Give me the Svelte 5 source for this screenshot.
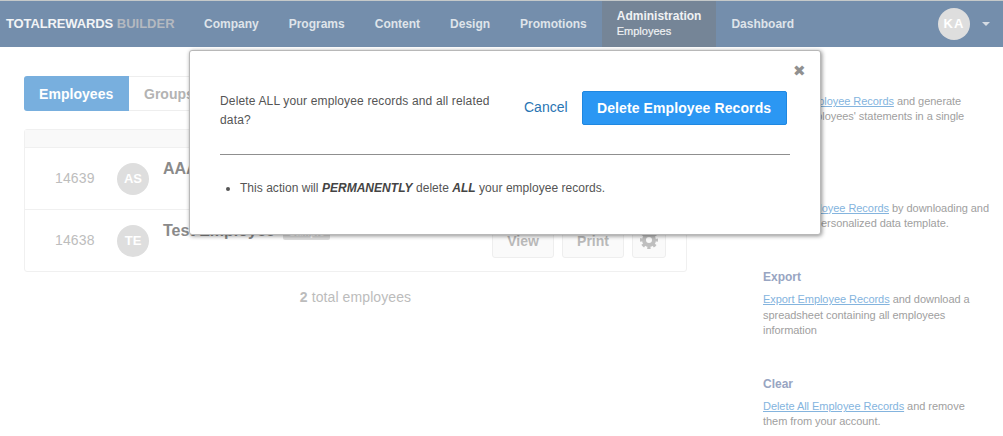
<script>
    const navItems = ['Company', 'Programs', 'Content', 'Design', 'Promotions'];

    const employees = [
        { id: 14639, initials: 'AS', name: 'AAA Sample', badge: '' },
        { id: 14638, initials: 'TE', name: 'Test Employee', badge: 'Sample' }
    ];
</script>

<div class="page">
    <nav class="navbar">
        <div class="brand"><b>TOTALREWARDS</b> <span>BUILDER</span></div>
        <div class="nav-items">
            {#each navItems as item}
                <a class="nav-item" href="#top">{item}</a>
            {/each}
            <a class="nav-item active" href="#top">Administration<small>Employees</small></a>
            <a class="nav-item" href="#top">Dashboard</a>
        </div>
        <div class="user">
            <div class="user-avatar">KA</div>
            <div class="caret"></div>
        </div>
    </nav>

    <div class="content">
        <main class="main">
            <div class="tabs">
                <div class="tab selected">Employees</div>
                <div class="tab">Groups</div>
            </div>
            <div class="card">
                <div class="card-head"></div>
                {#each employees as employee}
                    <div class="row">
                        <div class="emp-id">{employee.id}</div>
                        <div class="avatar">{employee.initials}</div>
                        <div class="name">
                            {employee.name}
                            {#if employee.badge}<span class="badge">{employee.badge}</span>{/if}
                        </div>
                        <div class="actions">
                            <button class="btn">View</button>
                            <button class="btn">Print</button>
                            <button class="btn gear" aria-label="Settings">
                                <svg width="18" height="18" viewBox="0 0 18 18">
                                    <circle cx="9" cy="9" r="5" fill="none" stroke="#bfbfbf" stroke-width="4" />
                                    <circle cx="9" cy="9" r="7.5" fill="none" stroke="#bfbfbf" stroke-width="3" stroke-dasharray="3.2 2.69" stroke-dashoffset="1.6" />
                                </svg>
                            </button>
                        </div>
                    </div>
                {/each}
            </div>
            <div class="total"><b>2</b> total employees</div>
        </main>

        <aside class="sidebar">
            <section>
                <h4>Review</h4>
                <p><a href="#top">Review Employee Records</a> and generate<br />all your employees' statements in a single<br />PDF file.</p>
            </section>
            <section>
                <h4>Import</h4>
                <p><a href="#top">Import Employee Records</a> by downloading and filling your personalized data template.</p>
            </section>
            <section>
                <h4>Export</h4>
                <p><a href="#top">Export Employee Records</a> and download a spreadsheet containing all employees information</p>
            </section>
            <section>
                <h4>Clear</h4>
                <p><a href="#top">Delete All Employee Records</a> and remove them from your account.</p>
            </section>
        </aside>
    </div>

    <div class="modal">
        <div class="close">&#10006;</div>
        <div class="modal-top">
            <p class="question">Delete ALL your employee records and all related data?</p>
            <a class="cancel" href="#top">Cancel</a>
            <button class="danger">Delete Employee Records</button>
        </div>
        <hr />
        <ul>
            <li>This action will <b><i>PERMANENTLY</i></b> delete <b><i>ALL</i></b> your employee records.</li>
        </ul>
    </div>
</div>

<style>
    :global(body) {
        margin: 0;
        background: #fff;
    }

    .page {
        position: relative;
        width: 1003px;
        height: 436px;
        overflow: hidden;
        font-family: "Liberation Sans", Arial, sans-serif;
    }

    .navbar {
        display: flex;
        align-items: stretch;
        height: 46px;
        background: #748eac;
        border-top: 1px solid #c5c9c9;
    }

    .brand {
        width: 189px;
        padding-left: 6px;
        box-sizing: border-box;
        line-height: 46px;
        font-size: 13px;
        font-weight: bold;
        white-space: nowrap;
        color: #f2f4f6;
    }

    .brand b {
        letter-spacing: -0.12px;
    }

    .brand span {
        color: #b4b9c0;
    }

    .nav-items {
        display: flex;
    }

    .nav-item {
        display: flex;
        flex-direction: column;
        justify-content: center;
        padding: 0 15px;
        color: #dfe4ea;
        font-size: 12px;
        font-weight: bold;
        text-decoration: none;
    }

    .nav-item.active {
        background: #758597;
        color: #f0f2f4;
        line-height: 15px;
    }

    .nav-item small {
        font-size: 11px;
        font-weight: normal;
        -webkit-text-stroke: 0.2px #f0f2f4;
    }

    .user {
        margin-left: auto;
        display: flex;
        align-items: center;
        padding-right: 13px;
    }

    .user-avatar {
        width: 32px;
        height: 32px;
        border-radius: 50%;
        background: #dedede;
        color: #fff;
        font-size: 13px;
        font-weight: bold;
        letter-spacing: 1px;
        text-align: center;
        line-height: 32px;
    }

    .caret {
        margin-left: 12px;
        border-top: 4px solid #d5dbe3;
        border-left: 4px solid transparent;
        border-right: 4px solid transparent;
    }

    .content {
        display: flex;
        padding: 24px 0 0 24px;
    }

    .main {
        width: 663px;
        padding-top: 5px;
    }

    .tabs {
        display: flex;
        height: 35px;
    }

    .tab {
        width: 105px;
        box-sizing: border-box;
        border: 1px solid #eee;
        border-left: 0;
        border-radius: 0 3px 3px 0;
        font-size: 14px;
        font-weight: bold;
        color: #b3b3b3;
        line-height: 35px;
        padding-left: 15px;
    }

    .tab.selected {
        background: #78afde;
        border: 0;
        border-radius: 3px 0 0 3px;
        color: #fff;
        line-height: 37px;
        letter-spacing: 0.05px;
    }

    .card {
        margin-top: 18px;
        border: 1px solid #f0f0f0;
        border-radius: 3px;
    }

    .card-head {
        height: 17px;
        background: #f9f9f9;
        border-bottom: 1px solid #f0f0f0;
    }

    .row {
        display: flex;
        align-items: flex-start;
        height: 62px;
        box-sizing: border-box;
        border-bottom: 1px solid #f0f0f0;
    }

    .row:last-child {
        height: 61px;
        border-bottom: 0;
    }

    .emp-id {
        width: 92px;
        padding: 22px 0 0 30px;
        box-sizing: border-box;
        font-size: 14px;
        letter-spacing: 0.15px;
        color: #bdbdbd;
        line-height: 16px;
    }

    .avatar {
        width: 32px;
        height: 32px;
        margin-top: 15px;
        border-radius: 50%;
        background: #dedede;
        color: #fff;
        font-size: 13px;
        font-weight: bold;
        text-align: center;
        line-height: 32px;
    }

    .name {
        margin: 11px 0 0 14px;
        font-size: 16px;
        font-weight: bold;
        color: #8a8a8a;
        line-height: 20px;
    }

    .badge {
        display: inline-block;
        width: 47px;
        height: 14px;
        margin-left: 4px;
        background: #dedede;
        border-radius: 2px;
        font-size: 10px;
        line-height: 14px;
        color: #fff;
        text-align: center;
    }

    .actions {
        display: flex;
        gap: 8px;
        margin: 14px 20px 0 auto;
    }

    .btn {
        width: 62px;
        height: 34px;
        padding: 0;
        background: #fafafa;
        border: 1px solid #eee;
        border-radius: 3px;
        font-family: inherit;
        font-size: 14px;
        font-weight: bold;
        color: #b9b9b9;
    }

    .btn.gear {
        width: 34px;
        display: flex;
        align-items: center;
        justify-content: center;
        padding-bottom: 2px;
    }

    .total {
        margin-top: 17px;
        text-align: center;
        font-size: 14px;
        letter-spacing: 0.1px;
        color: #bcbcbc;
    }

    .sidebar {
        margin-left: 76px;
        width: 228px;
        font-size: 11px;
        line-height: 15.4px;
        letter-spacing: -0.05px;
        color: #a0a0a0;
    }

    .sidebar section {
        margin-bottom: 37.6px;
    }

    .sidebar h4 {
        margin: 0 0 7px;
        font-size: 12px;
        line-height: 16px;
        font-weight: bold;
        letter-spacing: 0;
        color: #98a5c2;
    }

    .sidebar p {
        margin: 0;
    }

    .sidebar a {
        color: #84b4de;
    }

    .modal {
        position: absolute;
        left: 189px;
        top: 50px;
        width: 632px;
        height: 185px;
        box-sizing: border-box;
        padding: 40px 30px 0;
        background: #fff;
        border: 1px solid #b8b8b8;
        border-radius: 3px;
        box-shadow: 1px 1px 4px rgba(0, 0, 0, 0.45);
        font-size: 12px;
        color: #555;
    }

    .close {
        position: absolute;
        right: 14px;
        top: 11px;
        font-size: 15px;
        color: #909090;
        line-height: 18px;
    }

    .modal-top {
        display: flex;
        align-items: flex-start;
    }

    .question {
        width: 304px;
        margin: 1px 0 0;
        padding-right: 20px;
        box-sizing: border-box;
        line-height: 19px;
        letter-spacing: 0.15px;
    }

    .cancel {
        font-size: 14px;
        line-height: 32px;
        color: #2a75b3;
        text-decoration: none;
    }

    .danger {
        width: 205px;
        height: 34px;
        margin-left: 14px;
        padding: 0;
        background: #2b97f3;
        border: 1px solid #1f87e0;
        border-radius: 2px;
        color: #fff;
        font-family: inherit;
        font-size: 14px;
        font-weight: bold;
        letter-spacing: 0.1px;
    }

    hr {
        width: 570px;
        margin: 24px 0 0;
        border: 0;
        border-top: 1px solid #8f8f8f;
    }

    ul {
        margin: 25px 0 0;
        padding-left: 20px;
        line-height: 16px;
        letter-spacing: 0.03px;
    }

    li b {
        color: #444;
    }
</style>
